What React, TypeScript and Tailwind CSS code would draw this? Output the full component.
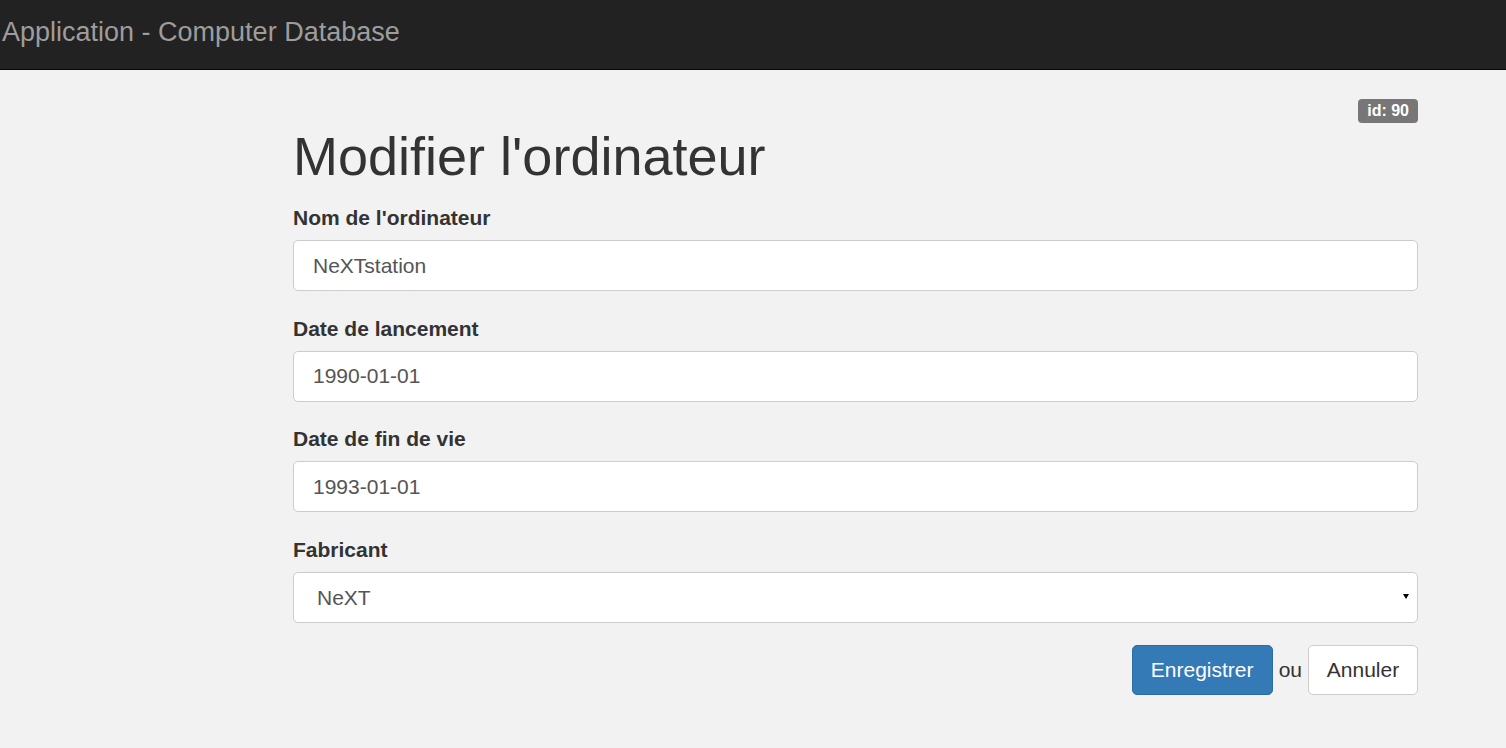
export default function App() {
  const font = { fontFamily: '"Liberation Sans", Arial, sans-serif' };
  return (
    <div className="min-h-[748px] bg-[#f2f2f2] text-[#333]" style={font}>
      <header className="h-[70px] bg-[#222] border-b border-[#080808] flex items-center">
        <a className="pl-[2px] text-[27px] text-[#9d9d9d] leading-none pb-[4px]">
          Application - Computer Database
        </a>
      </header>

      <main className="ml-[293px] w-[1125px]">
        <div className="flex justify-end pt-[29px]">
          <span className="bg-[#777] text-white text-[16px] font-bold leading-none px-[9px] py-[4px] rounded-[4px]">
            id: 90
          </span>
        </div>

        <h1 className="text-[54px] leading-none mt-[6px] mb-[23px]">Modifier l'ordinateur</h1>

        <form className="flex flex-col gap-[25.67px]">
          <Field label="Nom de l'ordinateur" value="NeXTstation" />
          <Field label="Date de lancement" value="1990-01-01" />
          <Field label="Date de fin de vie" value="1993-01-01" />
          <div className="flex flex-col gap-[10px]">
            <label className="text-[21px] font-bold leading-[24px]">Fabricant</label>
            <div className="relative h-[51px] bg-white border border-[#ccc] rounded-[5px] flex items-center pl-[23px]">
              <span className="text-[21px] text-[#555]">NeXT</span>
              <span className="absolute right-[8px] top-[21px] w-0 h-0 border-l-[3px] border-r-[3px] border-t-[5px] border-l-transparent border-r-transparent border-t-black" />
            </div>
          </div>
        </form>

        <div className="flex justify-end items-center mt-[22px] gap-[6px]">
          <button className="h-[50px] w-[141px] bg-[#337ab7] border border-[#2e6da4] text-white text-[21px] rounded-[5px]">
            Enregistrer
          </button>
          <span className="text-[21px]">ou</span>
          <button className="h-[50px] w-[110px] bg-white border border-[#ccc] text-[#333] text-[21px] rounded-[5px]">
            Annuler
          </button>
        </div>
      </main>
    </div>
  );
}

function Field({ label, value }: { label: string; value: string }) {
  return (
    <div className="flex flex-col gap-[10px]">
      <label className="text-[21px] font-bold leading-[24px]">{label}</label>
      <div className="h-[51px] bg-white border border-[#ccc] rounded-[5px] flex items-center px-[19px]">
        <span className="text-[21px] text-[#555]">{value}</span>
      </div>
    </div>
  );
}
